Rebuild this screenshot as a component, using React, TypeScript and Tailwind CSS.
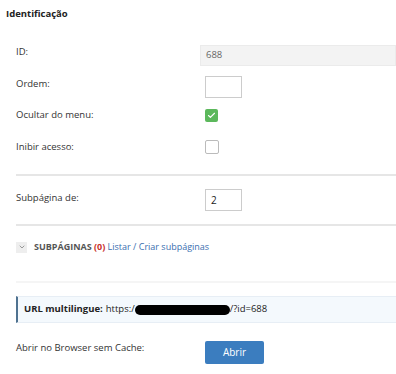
import { Check, ChevronDown } from 'lucide-react';

export default function App() {
  return (
    <div className="w-[396px] h-[374px] bg-white text-[#333] text-[9.5px] font-['Open_Sans',sans-serif] overflow-hidden">
      <h2 className="pl-[6px] pt-[7px] text-[9.5px] font-bold text-[#222] leading-[14px]">Identificação</h2>

      {/* Form rows */}
      <div className="mt-[24px] pl-[16px]">
        <div className="flex h-[21px]">
          <label className="w-[184px] leading-[14px]">ID:</label>
          <div className="flex-1 bg-[#f3f3f3] border border-[#ebebeb] pl-[5px] flex items-center text-[#666]">688</div>
        </div>

        <div className="flex items-center h-[22px] mt-[10px]">
          <label className="w-[189px] -mt-[5px]">Ordem:</label>
          <input className="w-[37px] h-[22px] border border-[#ccc] bg-white outline-none" />
        </div>

        <div className="flex items-center h-[14px] mt-[10px]">
          <label className="w-[189px]">Ocultar do menu:</label>
          <span className="w-[13px] h-[13px] rounded-[2px] bg-[#5cb85c] flex items-center justify-center">
            <Check className="w-[9px] h-[9px] text-white" strokeWidth={3} />
          </span>
        </div>

        <div className="flex items-center h-[14px] mt-[18px]">
          <label className="w-[189px]">Inibir acesso:</label>
          <span className="w-[14px] h-[14px] rounded-[2px] border border-[#bbb] bg-white" />
        </div>

        <div className="mt-[20px] border-t-2 border-[#e6e6e6]" />

        <div className="flex items-center h-[22px] mt-[13px]">
          <label className="w-[189px] -mt-[4px]">Subpágina de:</label>
          <div className="w-[37px] h-[22px] border border-[#ccc] bg-white pl-[5px] flex items-center text-[10px] text-[#222]">2</div>
        </div>

        <div className="mt-[13px] border-t-2 border-[#e6e6e6]" />

        <div className="flex items-center h-[12px] mt-[15px] gap-[7px] text-[9px]">
          <span className="w-[11px] h-[11px] bg-[#eee] flex items-center justify-center">
            <ChevronDown className="w-[8px] h-[8px] text-[#888]" strokeWidth={2.5} />
          </span>
          <span>
            <span className="font-bold text-[#555]">SUBPÁGINAS </span>
            <span className="font-bold text-[#c9302c]">(0)</span>{' '}
            <span className="text-[#3a6fb0]">Listar / Criar subpáginas</span>
          </span>
        </div>

        <div className="mt-[28px] border-t-2 border-[#f5f5f5]" />

        <div className="mt-[13px] h-[27px] bg-[#f4f9fd] border-l-2 border-[#4f7290] border-y border-y-[#e7eef5] pl-[6px] flex items-center text-[#222]">
          <span className="font-bold">URL multilingue:</span>
          <span className="ml-[3px]">https:/</span>
          <span className="inline-block w-[95px] h-[10px] bg-black rounded-full" />
          <span>/?id=688</span>
        </div>

        <div className="flex items-center h-[23px] mt-[18px]">
          <label className="w-[189px] -mt-[8px]">Abrir no Browser sem Cache:</label>
          <button className="w-[59px] h-[23px] bg-[#3b7dbf] text-white rounded-[2px] text-[10px]">Abrir</button>
        </div>
      </div>
    </div>
  );
}
